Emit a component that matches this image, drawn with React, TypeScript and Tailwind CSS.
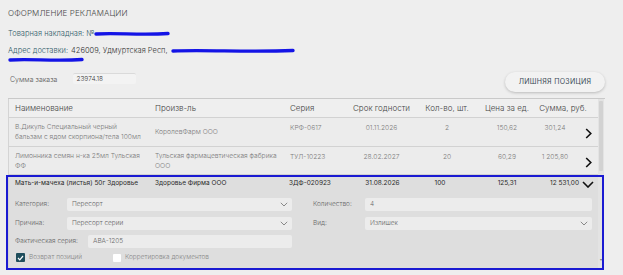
import React from 'react';

const cols = 'grid grid-cols-[146px_135px_63px_57px_74px_46px_50px_18px]';

function ChevronRight() {
  return (
    <svg width="7" height="11" viewBox="0 0 7 11" className="block">
      <polyline points="1.2,1 5.8,5.5 1.2,10" fill="none" stroke="#111" strokeWidth="1.6" />
    </svg>
  );
}

function ChevronDown({ big }: { big?: boolean }) {
  return big ? (
    <svg width="12" height="7" viewBox="0 0 12 7" className="block">
      <polyline points="1,1 6,6 11,1" fill="none" stroke="#111" strokeWidth="1.6" />
    </svg>
  ) : (
    <svg width="8" height="5" viewBox="0 0 8 5" className="block">
      <polyline points="0.8,0.8 4,4 7.2,0.8" fill="none" stroke="#888" strokeWidth="1" />
    </svg>
  );
}

function Scribble({ w, h = 6 }: { w: number; h?: number }) {
  return (
    <svg width={w} height={h} viewBox={`0 0 ${w} ${h}`} className="block">
      <path
        d={`M2 ${h / 2} C ${w * 0.3} ${h / 2 - 1.5}, ${w * 0.6} ${h / 2 + 1.5}, ${w - 2} ${h / 2 - 0.5}`}
        fill="none"
        stroke="#1414e6"
        strokeWidth="3.4"
        strokeLinecap="round"
      />
    </svg>
  );
}

const rows = [
  {
    name: ['В.Дикуль Специальный черный', 'бальзам с ядом скорпиона/тела 100мл'],
    maker: ['КоролевФарм ООО'],
    series: 'КРФ-0617',
    date: '01.11.2026',
    qty: '2',
    price: '150,62',
    sum: '301,24',
  },
  {
    name: ['Лимонника семян н-ка 25мл Тульская', 'ФФ'],
    maker: ['Тульская фармацевтическая фабрика', 'ООО'],
    series: 'ТУЛ-10223',
    date: '28.02.2027',
    qty: '20',
    price: '60,29',
    sum: '1 205,80',
  },
];

function Field({ value, select, className }: { value: string; select?: boolean; className: string }) {
  return (
    <div className={`h-[13px] bg-[#ececec] rounded-[2px] flex items-center justify-between pl-[5px] pr-[4px] text-[6.5px] text-[#666] ${className}`}>
      <span>{value}</span>
      {select && <ChevronDown />}
    </div>
  );
}

export default function App() {
  return (
    <div className="w-[623px] h-[275px] overflow-hidden bg-[#eeeeee] font-['Inter',sans-serif] font-light pl-[8px] pt-[8px]">
      <div className="text-[8px] leading-[10px] text-[#4a4a4a] tracking-[0.1px]">ОФОРМЛЕНИЕ РЕКЛАМАЦИИ</div>

      <div className="mt-[11px] flex items-center h-[10px] text-[7.5px] text-[#2f5a68]">
        <span>Товарная накладная: №</span>
        <Scribble w={76} />
      </div>

      <div className="mt-[7px] flex items-center h-[10px] text-[7.5px]">
        <span className="text-[#2f5a68]">Адрес доставки:</span>
        <span className="ml-[3px] text-[#333]">426009, Удмуртская Респ,</span>
        <span className="ml-[3px]"><Scribble w={124} /></span>
      </div>
      <div className="h-[8px] flex items-center">
        <Scribble w={76} />
      </div>

      <div className="mt-[8px] h-[20px] flex justify-between pr-[18px]">
        <div className="flex items-start pt-[1px] pl-[2px]">
          <span className="text-[7px] leading-[11px] text-[#555] mt-[1px]">Сумма заказа</span>
          <div className="ml-[16px] w-[63px] h-[11px] bg-[#f3f3f3] border-t border-[#dadada] rounded-[2px] text-[6.5px] leading-[10px] text-[#333] pl-[3px]">23974.18</div>
        </div>
        <button className="w-[100px] h-[20px] rounded-full bg-[#f2f2f2] shadow-[0_1px_3px_rgba(0,0,0,0.22)] text-[7px] font-normal text-[#3b4b57] tracking-[0.3px]">
          ЛИШНЯЯ ПОЗИЦИЯ
        </button>
      </div>

      <div className="mt-[6px] relative w-[597px] border-t border-[#c9c9c9]">
        <div className="flex h-[171px] border-l border-[#d4d4d4]">
          <div className="w-[589px]">
            <div className={`${cols} h-[19px] items-center text-[8px] text-[#444] whitespace-nowrap border-b border-[#d2d2d2] bg-[#efefef]`}>
              <div className="pl-[6px]">Наименование</div>
              <div>Произв-ль</div>
              <div>Серия</div>
              <div className="text-center -mx-[4px]">Срок годности</div>
              <div className="text-center">Кол-во, шт.</div>
              <div className="text-center">Цена за ед.</div>
              <div className="col-span-2 text-center pr-[2px]">Сумма, руб.</div>
            </div>

            {rows.map((r, i) => (
              <div
                key={i}
                className={`${cols} ${i === 0 ? 'h-[29px]' : 'h-[28px]'} items-center text-[6.7px] leading-[10px] text-[#7a7a7a] whitespace-nowrap border-b border-[#d2d2d2] bg-[#ececec]`}
              >
                <div className="pl-[6px]">{r.name.map((l) => <div key={l}>{l}</div>)}</div>
                <div>{r.maker.map((l) => <div key={l}>{l}</div>)}</div>
                <div className="self-start pt-[5px]">{r.series}</div>
                <div className="self-start pt-[5px] text-center">{r.date}</div>
                <div className="self-start pt-[5px] text-center">{r.qty}</div>
                <div className="self-start pt-[5px] text-center">{r.price}</div>
                <div className="self-start pt-[5px] text-center">{r.sum}</div>
                <div className="pl-[5px] pt-[3px]"><ChevronRight /></div>
              </div>
            ))}

            <div className="bg-[#dedede] h-[95px]">
              <div className={`${cols} h-[18px] items-center text-[6.5px] text-[#2a2a2a] font-normal whitespace-nowrap`}>
                <div className="pl-[6px]">Мать-и-мачеха (листья) 50г Здоровье</div>
                <div>Здоровье Фирма ООО</div>
                <div className="-ml-[1px]">ЗДФ-020923</div>
                <div className="text-center pl-[2px]">31.08.2026</div>
                <div className="text-center -ml-[14px]">100</div>
                <div className="text-center">125,31</div>
                <div className="text-right pr-[1px]">12 531,00</div>
                <div className="pl-[2px]"><ChevronDown big /></div>
              </div>

              <div className="mt-[5px] grid grid-cols-[277px_279px] gap-x-[21px] gap-y-[6px] pl-[6px] text-[6.5px] text-[#666]">
                <div className="flex items-center">
                  <span className="w-[52px]">Категория:</span>
                  <Field value="Пересорт" select className="flex-1" />
                </div>
                <div className="flex items-center">
                  <span className="w-[52px]">Количество:</span>
                  <Field value="4" className="flex-1" />
                </div>
                <div className="flex items-center">
                  <span className="w-[52px]">Причина:</span>
                  <Field value="Пересорт серии" select className="flex-1" />
                </div>
                <div className="flex items-center">
                  <span className="w-[52px]">Вид:</span>
                  <Field value="Излишек" select className="flex-1" />
                </div>
                <div className="flex items-center -mt-[1px]">
                  <span className="w-[73px]">Фактическая серия:</span>
                  <Field value="АВА-1205" className="flex-1" />
                </div>
                <div />
              </div>

              <div className="mt-[5px] pl-[7px] flex items-center h-[9px] text-[6.5px] text-[#888]">
                <span className="w-[9px] h-[9px] rounded-[1px] bg-[#1f4e5c] flex items-center justify-center">
                  <svg width="7" height="6" viewBox="0 0 7 6">
                    <polyline points="1,3 2.8,4.8 6,1" fill="none" stroke="#fff" strokeWidth="1.2" />
                  </svg>
                </span>
                <span className="ml-[4px] w-[84px]">Возврат позиций</span>
                <span className="w-[8px] h-[8px] bg-white rounded-[1px]" />
                <span className="ml-[4px]">Корретировка документов</span>
              </div>
            </div>
          </div>

          <div className="w-[6px] bg-[#e3e3e3] flex flex-col">
            <div className="mt-[2px] mx-[1px] h-[70px] bg-[#d2d2d2] rounded-[1px]" />
            <div className="flex-1" />
            <div className="mb-[8px] mx-auto text-[4px] leading-[4px] text-[#777]">▾</div>
          </div>
        </div>

        <div className="absolute left-[-2px] top-[76px] w-[598px] h-[95px] border-2 border-[#1a1ad2] pointer-events-none" />
      </div>
    </div>
  );
}
